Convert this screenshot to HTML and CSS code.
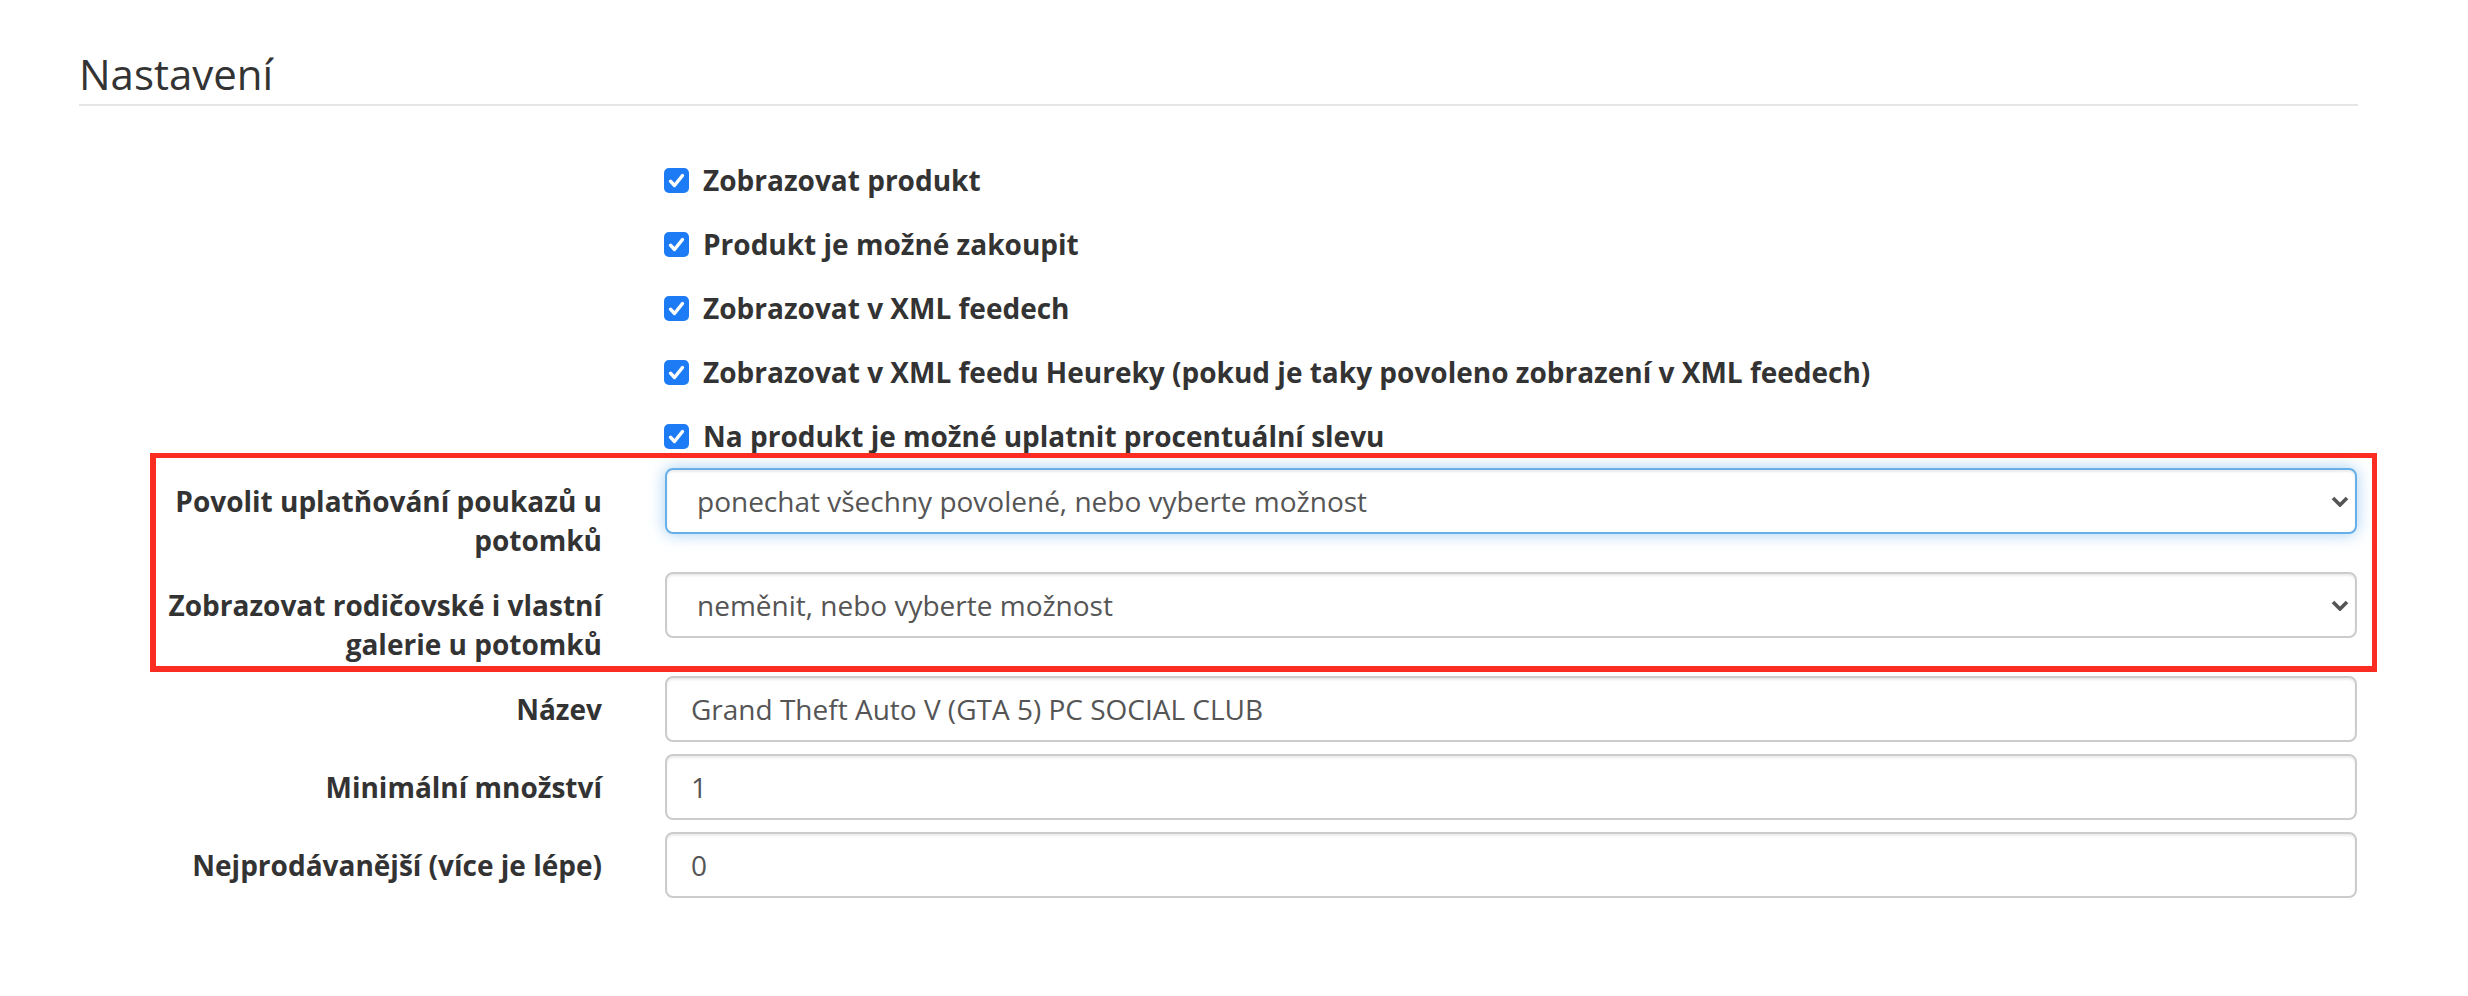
FILE: index.html
```html
<!DOCTYPE html>
<html lang="cs">

<head>
    <meta charset="UTF-8">
    <meta name="viewport" content="width=device-width, initial-scale=1.0">
    <title>Nastavení produktu</title>
    <link rel="stylesheet" href="styles.css">
</head>

<body>
    <div class="page">
        <h3 class="title">Nastavení</h3>

        <!-- zaškrtávací volby -->
        <div class="checks">
            <label class="check"><span class="box"><svg viewBox="0 0 25 25"><path d="M6.5 13.2l4 4.3 8-10" /></svg></span>Zobrazovat produkt</label>
            <label class="check"><span class="box"><svg viewBox="0 0 25 25"><path d="M6.5 13.2l4 4.3 8-10" /></svg></span>Produkt je možné zakoupit</label>
            <label class="check"><span class="box"><svg viewBox="0 0 25 25"><path d="M6.5 13.2l4 4.3 8-10" /></svg></span>Zobrazovat v XML feedech</label>
            <label class="check"><span class="box"><svg viewBox="0 0 25 25"><path d="M6.5 13.2l4 4.3 8-10" /></svg></span>Zobrazovat v XML feedu Heureky (pokud je taky povoleno zobrazení v XML feedech)</label>
            <label class="check"><span class="box"><svg viewBox="0 0 25 25"><path d="M6.5 13.2l4 4.3 8-10" /></svg></span>Na produkt je možné uplatnit procentuální slevu</label>
        </div>

        <!-- zvýrazněné řádky -->
        <div class="marked">
            <div class="row">
                <label class="lbl">Povolit uplatňování poukazů u potomků</label>
                <div class="select-wrap">
                    <select class="field focus">
                        <option>ponechat všechny povolené, nebo vyberte možnost</option>
                    </select>
                    <svg class="arrow" viewBox="0 0 18 11"><path d="M2 2l7 7 7-7" /></svg>
                </div>
            </div>
            <div class="row">
                <label class="lbl">Zobrazovat rodičovské i vlastní galerie u potomků</label>
                <div class="select-wrap">
                    <select class="field">
                        <option>neměnit, nebo vyberte možnost</option>
                    </select>
                    <svg class="arrow" viewBox="0 0 18 11"><path d="M2 2l7 7 7-7" /></svg>
                </div>
            </div>
        </div>

        <div class="row">
            <label class="lbl">Název</label>
            <input class="field" type="text" value="Grand Theft Auto V (GTA 5) PC SOCIAL CLUB">
        </div>
        <div class="row">
            <label class="lbl">Minimální množství</label>
            <input class="field" type="text" value="1">
        </div>
        <div class="row">
            <label class="lbl">Nejprodávanější (více je lépe)</label>
            <input class="field" type="text" value="0">
        </div>
    </div>
</body>

</html>
```

FILE: styles.css
```css
* {
    padding: 0;
    margin: 0;
    box-sizing: border-box;
}

body {
    background-color: #fff;
    color: #333;
    font-family: "Open Sans", "Noto Sans", sans-serif;
}

.page {
    width: 2387px;
    padding-left: 79px;
}

.title {
    width: 2279px;
    margin-top: 51px;
    padding-bottom: 7px;
    border-bottom: 2px solid #e5e5e5;
    font: 400 42px/46px "Open Sans", sans-serif;
    color: #333;
}

/* checkboxy */
.checks {
    margin: 42px 0 0 585px;
}

.check {
    display: flex;
    align-items: center;
    height: 64px;
    font: 700 28px/64px "Open Sans", sans-serif;
    color: #333;
}

.box {
    width: 25px;
    height: 25px;
    margin-right: 14px;
    border-radius: 5px;
    background-color: #1d7cf5;
    flex-shrink: 0;
}

.box svg {
    display: block;
    width: 25px;
    height: 25px;
    fill: none;
    stroke: #fff;
    stroke-width: 3.4;
    stroke-linecap: round;
    stroke-linejoin: round;
}

/* řádky formuláře */
.row {
    display: grid;
    grid-template-columns: 523px 1692px;
    column-gap: 63px;
    align-items: start;
    margin-bottom: 12px;
}

.lbl {
    padding-top: 14px;
    text-align: right;
    font: 700 28px/39px "Open Sans", sans-serif;
    color: #333;
}

.field {
    display: block;
    width: 100%;
    height: 66px;
    padding: 0 24px;
    border: 2px solid #ccc;
    border-radius: 8px;
    background-color: #fff;
    box-shadow: inset 0 2px 2px rgba(0, 0, 0, .075);
    font: 400 28px "Open Sans", sans-serif;
    color: #555;
    outline: none;
}

select.field {
    appearance: none;
    -webkit-appearance: none;
    padding-left: 30px;
}

.field.focus {
    border-color: #66afe9;
    box-shadow: inset 0 2px 2px rgba(0, 0, 0, .075), 0 0 16px rgba(102, 175, 233, .6);
}

.select-wrap {
    position: relative;
}

.arrow {
    position: absolute;
    right: 8px;
    top: 28px;
    width: 18px;
    height: 11px;
    fill: none;
    stroke: #555;
    stroke-width: 3.6;
}

/* červený rámeček kolem dvou řádků */
.marked {
    position: relative;
}

.marked::after {
    content: "";
    position: absolute;
    top: -15px;
    left: 71px;
    right: 10px;
    bottom: -8px;
    border: 5px solid #fb2c21;
    border-bottom-width: 6px;
    border-left-width: 6px;
    pointer-events: none;
}
```
